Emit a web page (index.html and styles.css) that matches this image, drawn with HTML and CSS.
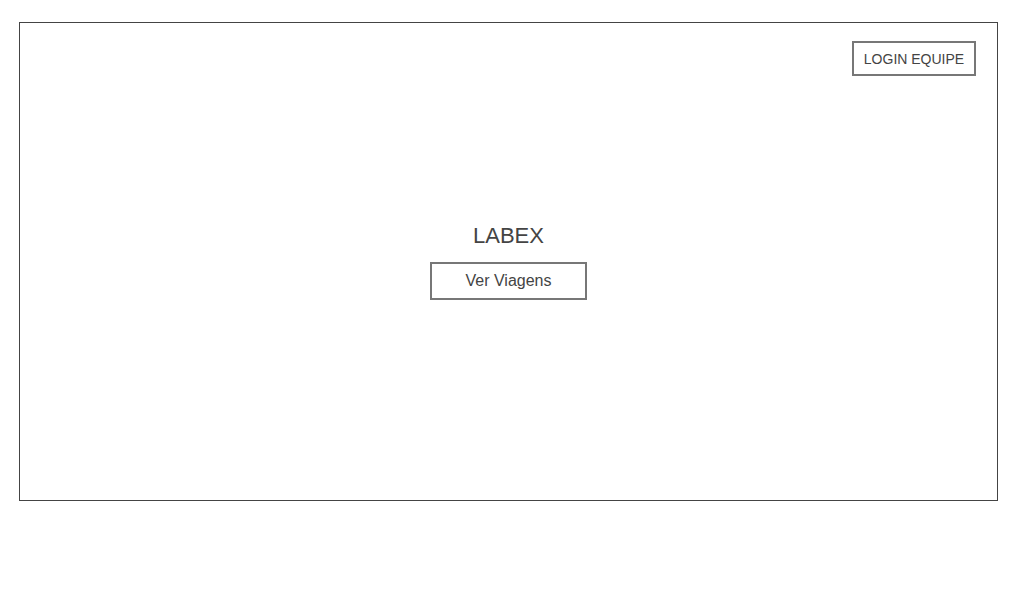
FILE: index.html
```html
<!DOCTYPE html>
<html lang="pt">
<head>
<meta charset="utf-8">
<title>LABEX</title>
<link rel="stylesheet" href="styles.css">
</head>
<body>
<div class="frame">
  <header class="top">
    <button class="login">LOGIN EQUIPE</button>
  </header>
  <main class="hero">
    <h1 class="title">LABEX</h1>
    <button class="trips">Ver Viagens</button>
  </main>
</div>
</body>
</html>
```
FILE: styles.css
```css
html, body {
  margin: 0;
  padding: 0;
  background: #fff;
}
body {
  font-family: "Liberation Sans", Arial, sans-serif;
  color: #444;
}
.frame {
  box-sizing: border-box;
  width: 979px;
  height: 479px;
  margin: 22px 0 0 19px;
  border: 1px solid #444;
  display: flex;
  flex-direction: column;
}
.top {
  display: flex;
  justify-content: flex-end;
  padding: 18px 21px 0 0;
}
.login {
  box-sizing: border-box;
  width: 124px;
  height: 35px;
  border: 2px solid #777;
  background: #fff;
  color: #444;
  font-family: "Liberation Sans", Arial, sans-serif;
  font-size: 14px;
  padding: 0;
  margin: 0;
}
.hero {
  display: flex;
  flex-direction: column;
  align-items: center;
  margin-top: 147px;
}
.title {
  margin: 0;
  font-size: 22px;
  font-weight: normal;
  line-height: 25px;
  color: #444;
}
.trips {
  box-sizing: border-box;
  margin-top: 14px;
  width: 157px;
  height: 38px;
  border: 2px solid #777;
  background: #fff;
  color: #444;
  font-family: "Liberation Sans", Arial, sans-serif;
  font-size: 16px;
  padding: 0;
}
```
